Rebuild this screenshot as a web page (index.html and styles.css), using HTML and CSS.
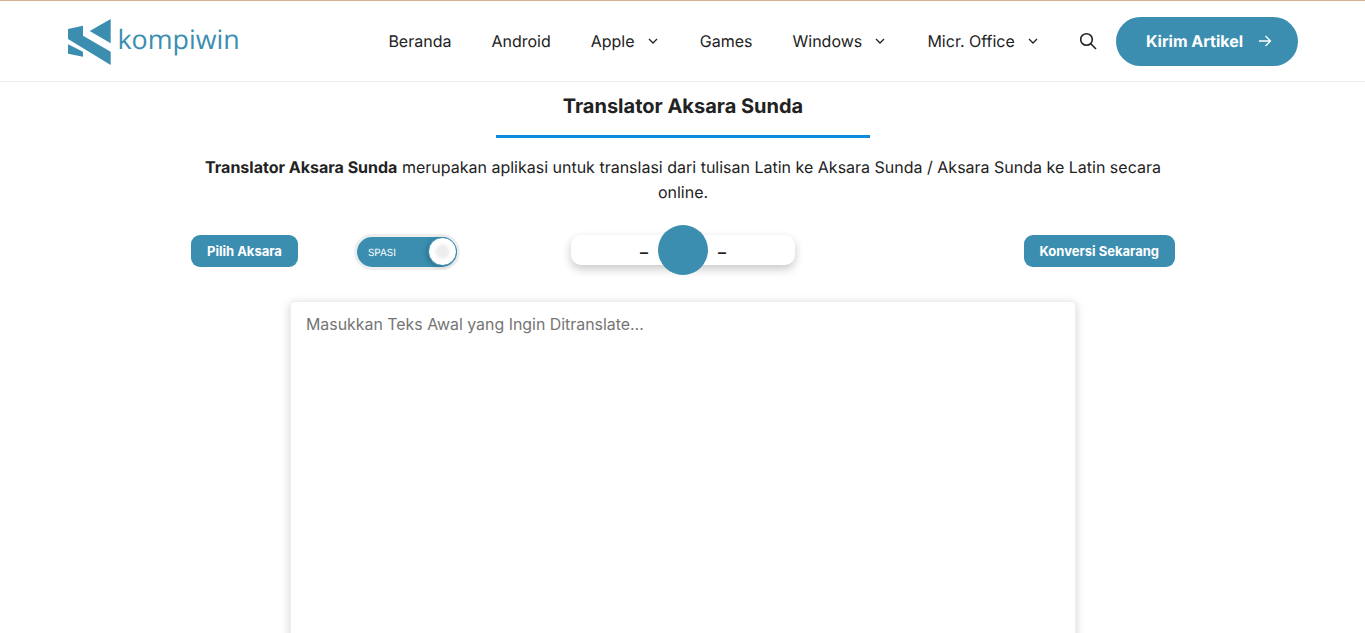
FILE: index.html
```html
<!DOCTYPE html>
<html lang="id">
<head>
<meta charset="utf-8">
<title>Translator Aksara Sunda</title>
<link rel="stylesheet" href="styles.css">
</head>
<body>
<header class="site-header">
  <a class="brand" href="#">
    <svg class="brand-mark" width="43" height="46" viewBox="0 0 43 46"><path d="M0 10 15 6.700V16.700L42.700 32.700V46L0 20Z" fill="#3b8eb0"/><path d="M0 25.300 15 32.700V37.700L0 34.700Z" fill="#3b8eb0"/><path d="M21.700 12 42.700 0V24.300Z" fill="#3b8eb0"/></svg>
    <span class="brand-name">kompiwin</span>
  </a>
  <nav class="nav">
    <a class="nav-link" href="#">Beranda</a>
    <a class="nav-link" href="#">Android</a>
    <a class="nav-link" href="#">Apple <svg class="chev" width="12" height="12" viewBox="0 0 12 12"><path d="M2 4l4 4 4-4" fill="none" stroke="#222" stroke-width="1.300"/></svg></a>
    <a class="nav-link" href="#">Games</a>
    <a class="nav-link" href="#">Windows <svg class="chev" width="12" height="12" viewBox="0 0 12 12"><path d="M2 4l4 4 4-4" fill="none" stroke="#222" stroke-width="1.300"/></svg></a>
    <a class="nav-link" href="#">Micr. Office <svg class="chev" width="12" height="12" viewBox="0 0 12 12"><path d="M2 4l4 4 4-4" fill="none" stroke="#222" stroke-width="1.300"/></svg></a>
  </nav>
  <svg class="search" width="18" height="18" viewBox="0 0 18 18"><circle cx="7.500" cy="7.500" r="5.800" fill="none" stroke="#222" stroke-width="1.600"/><path d="M11.800 11.800 17 17" stroke="#222" stroke-width="1.600" fill="none"/></svg>
  <a class="cta" href="#">Kirim Artikel <svg class="cta-arrow" width="16" height="14" viewBox="0 0 16 14"><path d="M2 7h11.500M8.500 2l5 5-5 5" fill="none" stroke="#fff" stroke-width="1.300"/></svg></a>
</header>
<main class="main">
  <h1 class="title">Translator Aksara Sunda</h1>
  <p class="intro"><strong>Translator Aksara Sunda</strong> merupakan aplikasi untuk translasi dari tulisan Latin ke Aksara Sunda / Aksara Sunda ke Latin secara online.</p>
  <div class="controls">
    <button class="btn">Pilih Aksara</button>
    <div class="toggle"><span class="toggle-label">SPASI</span><span class="knob"></span></div>
    <div class="swap"><span class="dash">–</span><span class="swap-ball"></span><span class="dash">–</span></div>
    <button class="btn btn-end">Konversi Sekarang</button>
  </div>
  <textarea class="input" placeholder="Masukkan Teks Awal yang Ingin Ditranslate..."></textarea>
</main>
</body>
</html>
```
FILE: styles.css
```css
* { box-sizing: border-box; }
html, body { margin: 0; height: 633px; overflow: hidden; }
body { font-family: Inter, "Liberation Sans", sans-serif; color: #222; background: #fff; text-rendering: geometricPrecision; }
a { color: inherit; text-decoration: none; }

.site-header {
  height: 82px;
  border-top: 1px solid #d2b48c;
  border-bottom: 1px solid #eee;
  padding: 0 67px 0 68px;
  display: flex;
  align-items: center;
}
.brand { display: flex; align-items: center; gap: 6.500px; margin-top: 1px; }
.brand-mark { display: block; }
.brand-name { font-family: "Open Sans", sans-serif; font-size: 26.800px; line-height: 40px; color: #3b8eb0; margin-top: -6px; }
.nav { margin-left: auto; display: flex; gap: 40px; align-items: center; }
.nav-link { font-size: 16px; line-height: 24px; display: flex; align-items: center; }
.chev { margin-left: 12px; margin-right: 1.200px; }
.search { margin-left: 39px; }
.cta {
  margin-left: 19px;
  width: 182px;
  height: 49px;
  padding-left: 5px;
  border-radius: 25px;
  background: #3b8eb0;
  color: #fff;
  font-weight: 700;
  font-size: 16px;
  display: flex;
  align-items: center;
  justify-content: center;
  gap: 14px;
}
.main { display: flex; flex-direction: column; align-items: center; padding-left: 1px; }
.title {
  margin: 0;
  width: 374px;
  height: 56px;
  padding-top: 10px;
  font-size: 20px;
  line-height: 28px;
  font-weight: 700;
  text-align: center;
  border-bottom: 3px solid #0d8adb;
}
.intro { margin: 16.800px 0 0; width: 984px; font-size: 16px; line-height: 25.600px; text-align: center; }
.controls { width: 984px; height: 50px; margin-top: 19.200px; display: flex; align-items: center; }
.btn {
  height: 32px;
  margin-top: 2px;
  padding: 0 16px;
  border: 0;
  border-radius: 9px;
  background: #3b8eb0;
  color: #fff;
  font: 700 13px Inter, sans-serif;
}
.toggle {
  margin-left: 59px;
  width: 100px;
  height: 30px;
  margin-top: 3px;
  padding-left: 11px;
  border-radius: 15px;
  background: #3b8eb0;
  box-shadow: 0 0 0 3px #eee;
  display: flex;
  align-items: center;
  justify-content: space-between;
}
.toggle-label { font-size: 10px; color: #fff; margin-top: 2px; }
.knob { width: 29px; height: 29px; border-radius: 50%; border: 1px solid #3b8eb0; background: radial-gradient(circle, #eee 0 5px, #fff 9px); box-shadow: -2px 1px 4px rgba(0,0,0,.2); }
.swap {
  margin-left: 114px;
  width: 224px;
  height: 30px;
  border-radius: 10px;
  background: #fff;
  box-shadow: 0 4px 10px rgba(0,0,0,.22);
  display: flex;
  align-items: center;
  justify-content: center;
  gap: 10px;
  font-weight: 600;
  font-size: 16px;
}
.swap-ball { width: 50px; height: 50px; border-radius: 50%; background: #3b8eb0; }
.dash { margin-top: 3px; }
.btn-end { margin-left: auto; }
.input {
  display: block;
  width: 786px;
  height: 500px;
  margin-top: 26px;
  padding: 10px 15px;
  border: 1px solid #eee;
  border-radius: 4px;
  box-shadow: 0 2px 10px rgba(0,0,0,.18);
  font: 15.900px/26px Inter, sans-serif;
  resize: none;
  outline: 0;
}
.input::placeholder { color: #757575; }
```
